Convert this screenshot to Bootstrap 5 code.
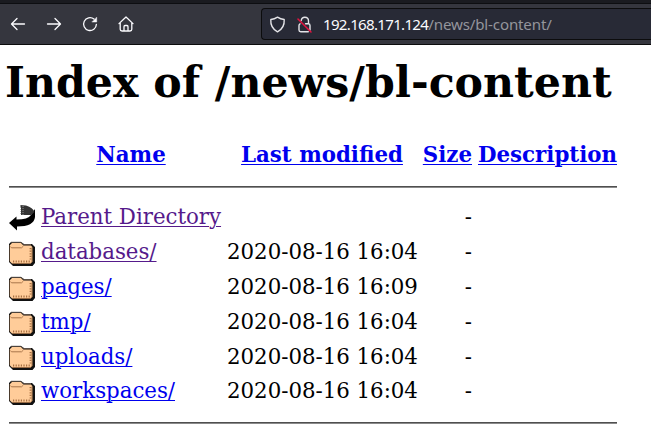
<!DOCTYPE html>
<html lang="en">
<head>
<meta charset="utf-8">
<title>Index of /news/bl-content</title>
<link href="https://cdn.jsdelivr.net/npm/bootstrap@5.3.0/dist/css/bootstrap.min.css" rel="stylesheet">
<style>
body{background:#fff;color:#000;font-family:"DejaVu Serif",serif;font-size:21.33px;overflow:hidden}
.tabstrip{height:4px;background:#1a1b20;border-bottom:1px solid #0d0e11}
.toolbar{height:41px;background:#35363e;border-bottom:1px solid #0c0c0d;padding-left:10px}
.toolbar svg{flex:none;display:block}
.navicons{gap:20px;width:251px}
.address{height:32px;background:#282a36;border:1px solid #0c0c0d;border-right:0;border-radius:4px 0 0 4px;padding-left:7px;font:15.1px "Noto Sans",sans-serif;color:#fbfbfe;white-space:nowrap}
.address .host{letter-spacing:-.7px;margin-left:1px}
.address .path{color:#94959c;letter-spacing:-.15px}
.listing-title{font-size:42.67px;font-weight:700;line-height:50px;margin:12px 0 0 5px;white-space:nowrap}
.listing{table-layout:fixed;width:608px;margin:30px 0 0 9px;border-collapse:collapse;line-height:34.8px}
.listing td,.listing th{padding:0;white-space:nowrap;height:34.8px}
.listing th{padding-top:1px}
.name-head{margin-right:6px}
.listing .rule{height:27px;line-height:0}
.listing .rule-top{height:27.6px}
.listing .rule div{height:2px;border-top:1px solid #4f4f4f;background:#8a8a8a}
.listing a{color:#00e;text-decoration:underline;text-decoration-thickness:1px;text-underline-offset:2px}
.listing a.seen{color:#551a8b}
.listing td{letter-spacing:-.02px}
.listing svg{display:block}
.folder-icon{margin-top:3px}
</style>
<script src="https://cdn.jsdelivr.net/npm/bootstrap@5.3.0/dist/js/bootstrap.bundle.min.js"></script>
</head>
<body>
<svg class="d-none">
<symbol id="folder" viewBox="0 0 26 26">
<path d="M2 1H12L15 3H23L26 6V22L23.5 25H4L0 21V3Z" fill="#111"/>
<path d="M1 4L3 2H12L14.5 4.5H22L23.3 6V21L21.5 22.5H3L1 20.5Z" fill="#ffcc99"/>
<path d="M1.3 5.5L2.5 6.8H12.5L14.3 5.2" fill="none" stroke="#a9754a"/>
<path d="M2 1.3H12L14.3 3.5H22" fill="none" stroke="#5c5048"/>
<path d="M.5 4V20.5" stroke="#4a3a2c"/>
<path d="M21.5 7V19.5M4 20.5H21" fill="none" stroke="#a87042" stroke-width="1.8" stroke-dasharray="1.2 1.4"/>
<path d="M23 6.5V21L21.3 22.5H3.5" fill="none" stroke="#9a6a40" stroke-width=".8"/>
</symbol>
</svg>
<div class="tabstrip"></div>
<nav class="toolbar d-flex align-items-center">
<div class="navicons d-flex flex-shrink-0">
<svg width="16" height="16" viewBox="0 0 16 16" fill="none" stroke="#fbfbfe" stroke-width="1.3" stroke-linecap="round" stroke-linejoin="round"><path d="M14.5 8H1.7M7 2.5L1.5 8L7 13.5"/></svg>
<svg width="16" height="16" viewBox="0 0 16 16" fill="none" stroke="#fbfbfe" stroke-width="1.3" stroke-linecap="round" stroke-linejoin="round"><path d="M1.5 8H14.3M9 2.5L14.5 8L9 13.5"/></svg>
<svg width="16" height="16" viewBox="0 0 16 16" fill="none" stroke="#fbfbfe" stroke-width="1.3" stroke-linecap="round"><path d="M12 3.1A6.4 6.4 0 1 0 14.4 8.3"/><path d="M14.7 1.5V6H10.2Z" fill="#fbfbfe" stroke-width=".5"/></svg>
<svg width="16" height="16" viewBox="0 0 16 16" fill="none" stroke="#fbfbfe" stroke-width="1.3" stroke-linecap="round" stroke-linejoin="round"><path d="M1 7.6L8 1L15 7.6M2.2 7V13.3Q2.2 15 4 15H12Q13.8 15 13.8 13.3V7M6 14.8V10.7Q6 9.5 7 9.5H9Q10 9.5 10 10.7V14.8"/></svg>
</div>
<div class="address d-flex align-items-center flex-grow-1">
<svg width="17" height="17" viewBox="0 0 17 17" fill="none" stroke="#e4e4e8" stroke-width="1.4" stroke-linejoin="round"><path d="M8.5 1.2Q11.5 3.2 15.2 3.5Q15.8 12 8.5 15.8Q1.2 12 1.8 3.5Q5.5 3.2 8.5 1.2Z"/></svg>
<svg class="ms-2 me-2" width="20" height="17" viewBox="0 0 20 17" fill="none" stroke="#e4e4e8" stroke-width="1.4" stroke-linecap="round"><path d="M7.2 4.5Q7.7 1.2 10.8 1.2Q14.5 1.2 14.5 5V7.5M11.5 7.8H14.2Q16 7.8 16 9.5V14M6 7.8Q5 8.3 5 9.5V14Q5 15.7 6.7 15.7H14.3"/><path d="M4 3L17 16" stroke="#e5133f" stroke-width="1.5"/></svg>
<span><span class="host">192.168.171.124</span><span class="path">/news/bl-content/</span></span>
</div>
</nav>
<main>
<h1 class="listing-title">Index of /news/bl-content</h1>
<table class="listing">
<colgroup><col style="width:32px"><col style="width:186px"><col style="width:190px"><col style="width:55px"><col style="width:145px"></colgroup>
<tr><th></th><th class="text-center"><a href="#" class="name-head">Name</a></th><th class="text-center"><a href="#">Last modified</a></th><th class="text-end"><a href="#">Size</a></th><th class="text-end"><a href="#">Description</a></th></tr>
<tr><td colspan="5" class="rule rule-top"><div></div></td></tr>
<tr><td><svg width="27" height="27" viewBox="0 0 27 27"><path d="M0 19L7.5 12.5V15.5Q19 15.5 22 11L26 5V13Q25 22.5 8 22.5V26.5Z" fill="#000"/><path d="M11 1L17 1.5Q24 3.5 25.5 8L22 11H12V4Z" fill="#333"/><path d="M11.5 1V11M14 2V11" stroke="#aaa" stroke-width=".8" stroke-dasharray="1 1"/></svg></td><td><a class="seen" href="#">Parent Directory</a></td><td></td><td class="text-end">-</td><td></td></tr>
<tr><td><svg class="folder-icon" width="26" height="26"><use href="#folder"/></svg></td><td><a class="seen" href="#">databases/</a></td><td class="text-end">2020-08-16 16:04</td><td class="text-end">-</td><td></td></tr>
<tr><td><svg class="folder-icon" width="26" height="26"><use href="#folder"/></svg></td><td><a href="#">pages/</a></td><td class="text-end">2020-08-16 16:09</td><td class="text-end">-</td><td></td></tr>
<tr><td><svg class="folder-icon" width="26" height="26"><use href="#folder"/></svg></td><td><a href="#">tmp/</a></td><td class="text-end">2020-08-16 16:04</td><td class="text-end">-</td><td></td></tr>
<tr><td><svg class="folder-icon" width="26" height="26"><use href="#folder"/></svg></td><td><a href="#">uploads/</a></td><td class="text-end">2020-08-16 16:04</td><td class="text-end">-</td><td></td></tr>
<tr><td><svg class="folder-icon" width="26" height="26"><use href="#folder"/></svg></td><td><a href="#">workspaces/</a></td><td class="text-end">2020-08-16 16:04</td><td class="text-end">-</td><td></td></tr>
<tr><td colspan="5" class="rule"><div></div></td></tr>
</table>
</main>
</body>
</html>
